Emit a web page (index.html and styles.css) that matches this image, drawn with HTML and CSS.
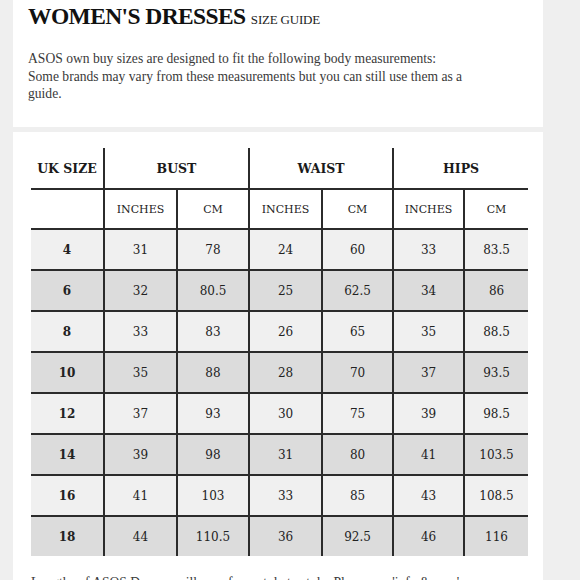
FILE: index.html
```html
<!DOCTYPE html>
<html>
<head>
<meta charset="utf-8">
<link rel="stylesheet" href="styles.css">
</head>
<body>
<section class="panel intro">
  <h1 class="title">WOMEN'S DRESSES <span class="sub">SIZE GUIDE</span></h1>
  <p class="lead">ASOS own buy sizes are designed to fit the following body measurements:<br>Some brands may vary from these measurements but you can still use them as a guide.</p>
</section>
<section class="panel chart">
  <table class="sizes">
    <colgroup>
      <col class="c1"><col class="c2"><col class="c3"><col class="c4"><col class="c5"><col class="c6"><col class="c7">
    </colgroup>
    <thead>
      <tr class="h1">
        <th>UK SIZE</th>
        <th colspan="2">BUST</th>
        <th colspan="2">WAIST</th>
        <th colspan="2">HIPS</th>
      </tr>
      <tr class="h2">
        <th></th>
        <th>INCHES</th><th>CM</th>
        <th>INCHES</th><th>CM</th>
        <th>INCHES</th><th>CM</th>
      </tr>
    </thead>
    <tbody>
      <tr class="lt"><td class="sz">4</td><td>31</td><td>78</td><td>24</td><td>60</td><td>33</td><td>83.5</td></tr>
      <tr class="dk"><td class="sz">6</td><td>32</td><td>80.5</td><td>25</td><td>62.5</td><td>34</td><td>86</td></tr>
      <tr class="lt"><td class="sz">8</td><td>33</td><td>83</td><td>26</td><td>65</td><td>35</td><td>88.5</td></tr>
      <tr class="dk"><td class="sz">10</td><td>35</td><td>88</td><td>28</td><td>70</td><td>37</td><td>93.5</td></tr>
      <tr class="lt"><td class="sz">12</td><td>37</td><td>93</td><td>30</td><td>75</td><td>39</td><td>98.5</td></tr>
      <tr class="dk"><td class="sz">14</td><td>39</td><td>98</td><td>31</td><td>80</td><td>41</td><td>103.5</td></tr>
      <tr class="lt"><td class="sz">16</td><td>41</td><td>103</td><td>33</td><td>85</td><td>43</td><td>108.5</td></tr>
      <tr class="dk"><td class="sz">18</td><td>44</td><td>110.5</td><td>36</td><td>92.5</td><td>46</td><td>116</td></tr>
    </tbody>
  </table>
  <p class="note">Lengths of ASOS Dresses will vary from style to style. Please see 'info &amp; care' on the product page for the length of each dress.</p>
</section>
</body>
</html>
```

FILE: styles.css
```css
html, body {
  margin: 0;
  padding: 0;
  background: #efefef;
  height: 580px;
  overflow: hidden;
}
body {
  font-family: "DejaVu Serif", Georgia, serif;
  color: #333;
}
.panel {
  background: #fff;
  margin-left: 13px;
  width: 530px;
}
.intro {
  height: 127px;
  padding: 0 15px;
  box-sizing: border-box;
  overflow: hidden;
}
.title {
  margin: 0;
  padding-top: 4px;
  font-family: "Liberation Serif", "Times New Roman", serif;
  font-size: 23.5px;
  line-height: 24px;
  font-weight: bold;
  letter-spacing: -0.6px;
  color: #111;
}
.sub {
  font-size: 13px;
  font-weight: normal;
  letter-spacing: -0.2px;
  color: #222;
}
.lead {
  margin: 18px 0 0;
  width: 470px;
  font-family: "Liberation Serif", "Times New Roman", serif;
  font-size: 13.6px;
  line-height: 17.5px;
  color: #3a3a3a;
}
.chart {
  margin-top: 5px;
  padding: 16px 15px 0 18px;
  height: 460px;
  box-sizing: border-box;
}
.sizes {
  border-collapse: collapse;
  table-layout: fixed;
  width: 497px;
}
.c1 { width: 73px; }
.c2 { width: 73px; }
.c3 { width: 72px; }
.c4 { width: 73px; }
.c5 { width: 71px; }
.c6 { width: 71px; }
.c7 { width: 64px; }
.sizes th, .sizes td {
  padding: 0;
  text-align: center;
  border-left: 2px solid #2b2b2b;
  border-bottom: 2px solid #2b2b2b;
  color: #222;
}
.sizes tr > :first-child {
  border-left: none;
}
.sizes tbody tr:last-child td {
  border-bottom: none;
}
.h1 th {
  height: 40px;
  font-size: 12.5px;
  font-weight: bold;
  color: #1a1a1a;
}
.h2 th {
  height: 38px;
  font-size: 11px;
  font-weight: normal;
}
.sizes td {
  height: 39px;
  font-size: 12px;
  line-height: 16px;
}
.sizes td.sz {
  font-weight: bold;
}
.lt td { background: #f0f0f0; }
.dk td { background: #dcdcdc; }
.note {
  margin: 18px 0 0;
  width: 450px;
  font-family: "Liberation Serif", "Times New Roman", serif;
  font-size: 13.6px;
  line-height: 17.5px;
  color: #3a3a3a;
}
```
